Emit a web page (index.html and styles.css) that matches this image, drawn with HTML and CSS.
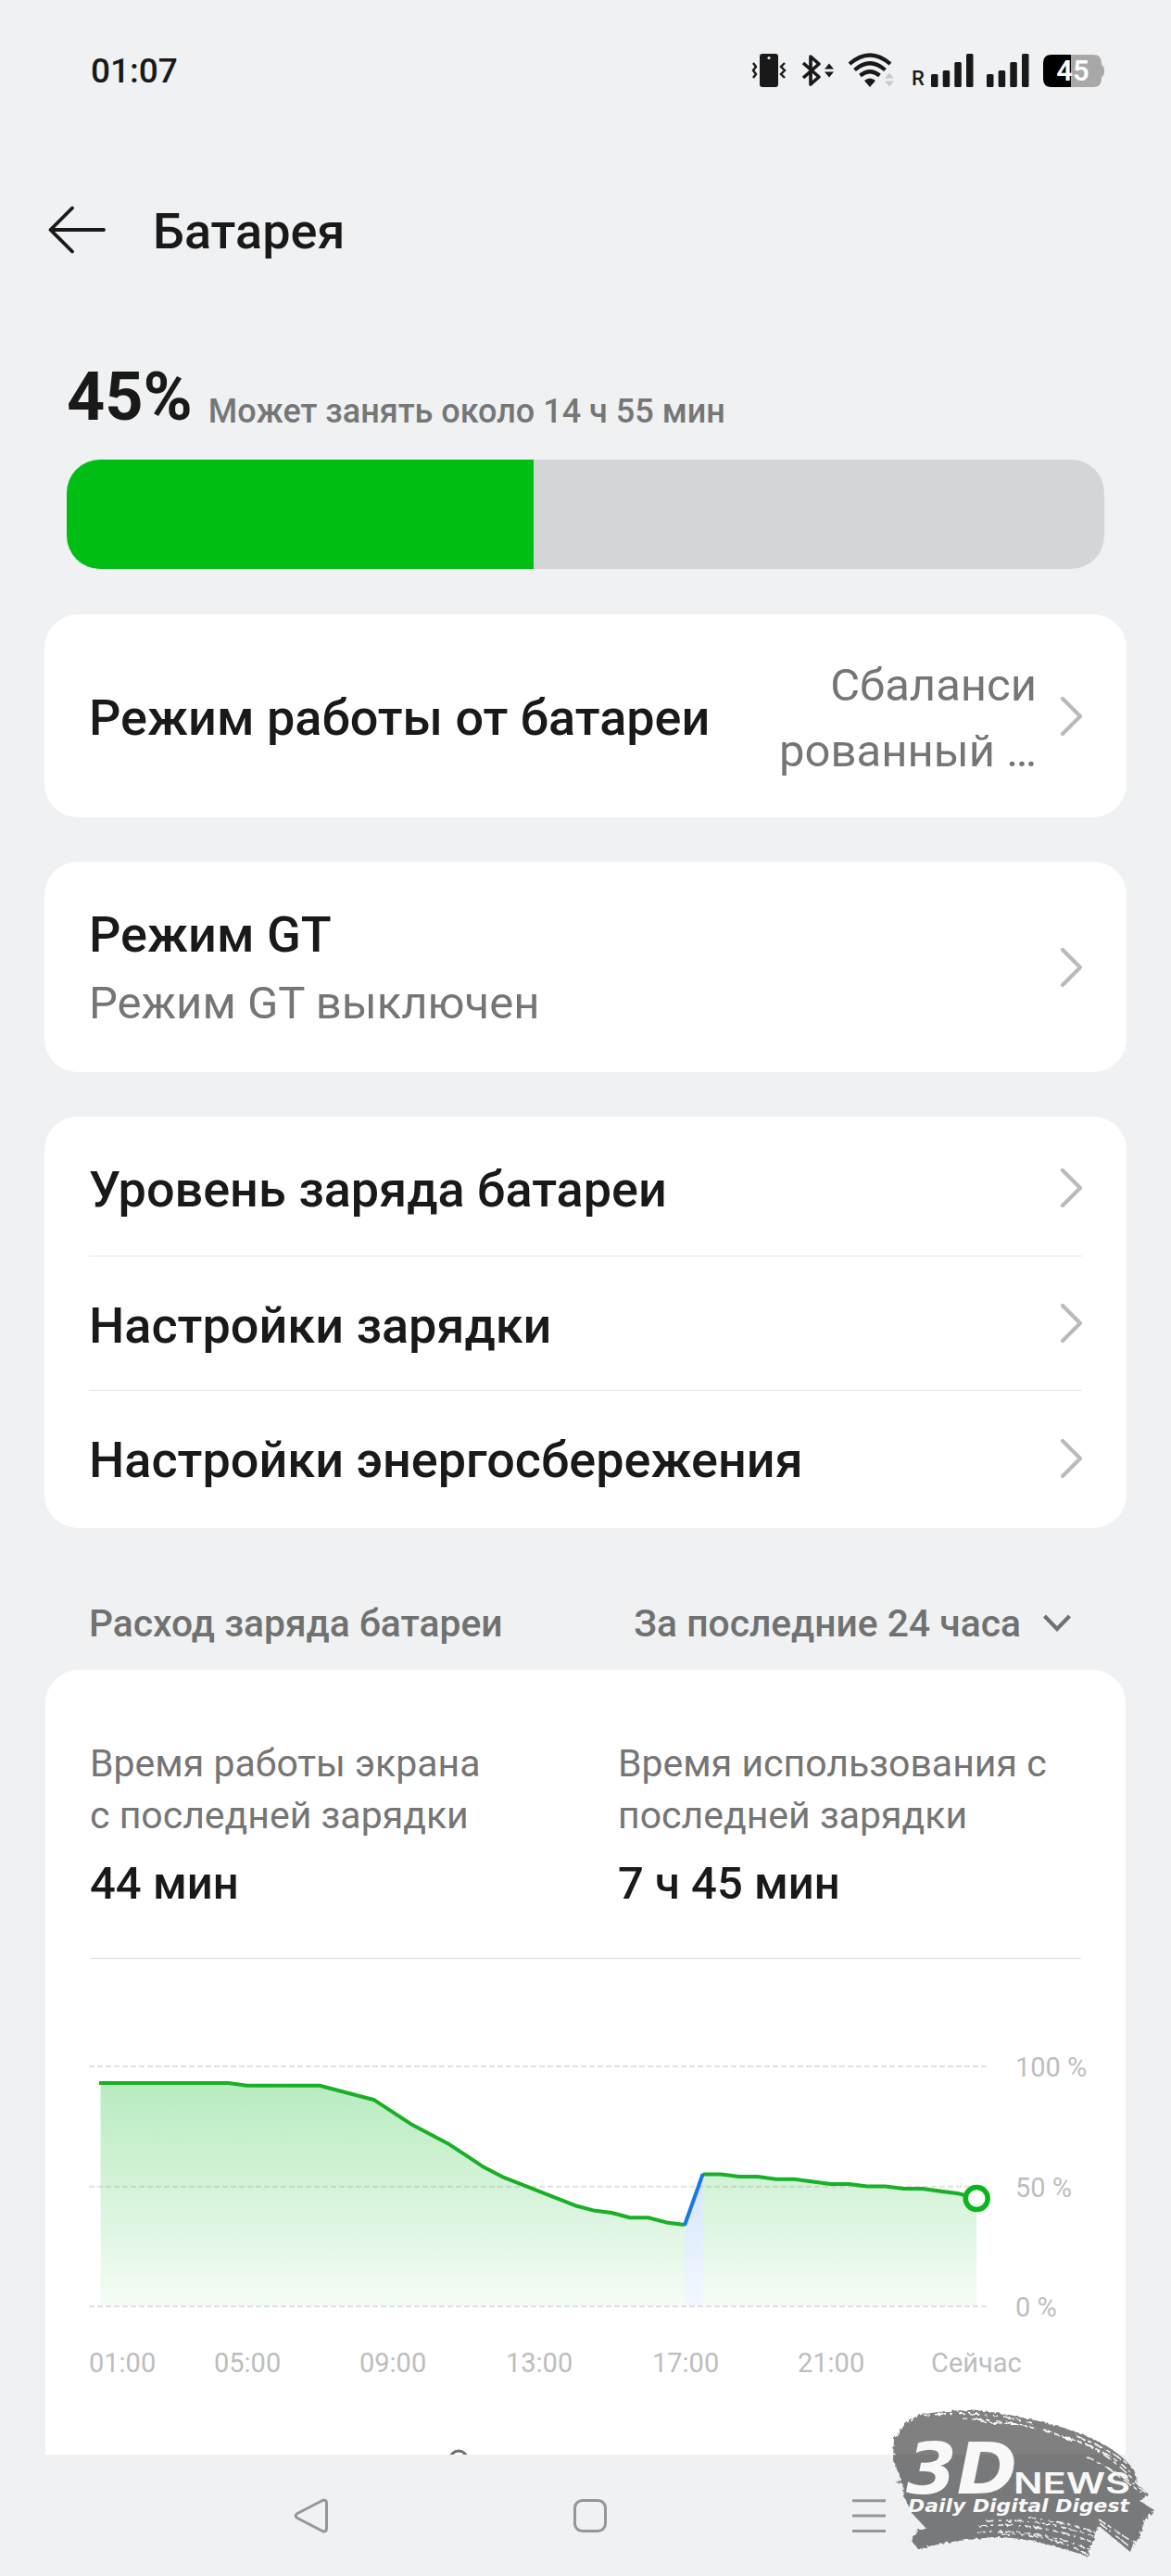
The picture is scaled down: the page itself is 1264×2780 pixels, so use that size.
FILE: index.html
```html
<!DOCTYPE html>
<html lang="ru">
<head>
    <meta charset="UTF-8">
    <meta name="viewport" content="width=device-width, initial-scale=1.0">
    <title>Батарея</title>
    <link rel="stylesheet" href="styles.css">
</head>
<body>
    <div class="screen">
        <!-- Status bar -->
        <div class="status-bar">
            <div class="status-time">01:07</div>
            <div class="status-icons">
                <svg class="icon-vibrate" width="38" height="38" viewBox="0 0 38 38">
                    <rect x="9" y="1" width="20" height="36" rx="3" fill="#191919"/>
                    <circle cx="19" cy="5.5" r="1.6" fill="#eff1f3"/>
                    <path d="M2 11l3 4-3 4 3 4-3 4M36 11l-4 4 4 4-4 4 4 4" fill="none" stroke="#191919" stroke-width="2.4"/>
                </svg>
                <svg class="icon-bluetooth" width="38" height="38" viewBox="0 0 38 38">
                    <path d="M3 11l17 15-9 8V4l9 8L3 27" fill="none" stroke="#191919" stroke-width="3.6" stroke-linejoin="round"/>
                    <path d="M31 11.500l5 6H26zM31 26.500l5-6H26z" fill="#191919"/>
                </svg>
                <svg class="icon-wifi" width="52" height="38" viewBox="0 0 52 38">
                    <path d="M3 12Q25 -7 47 12M8.500 18.500Q25 4 41.500 18.500M14.500 24.500Q25 16 35.500 24.500" fill="none" stroke="#191919" stroke-width="4.200"/>
                    <path d="M19 30Q25 25 31 30L25 37z" fill="#191919"/>
                    <path d="M46 21.500l5 6H41zM46 36.500l5-6H41z" fill="#c9cacc"/>
                </svg>
                <div class="roaming">R</div>
                <svg class="icon-signal" width="46" height="38" viewBox="0 0 46 38">
                    <g fill="#191919">
                        <rect x="0" y="23" width="7.500" height="14" rx="1.500"/>
                        <rect x="12.700" y="19" width="7.500" height="18" rx="1.500"/>
                        <rect x="25.300" y="10" width="7.500" height="27" rx="1.500"/>
                        <rect x="38" y="1" width="7.500" height="36" rx="1.500"/>
                    </g>
                </svg>
                <svg class="icon-signal second" width="46" height="38" viewBox="0 0 46 38">
                    <g fill="#191919">
                        <rect x="0" y="23" width="7.500" height="14" rx="1.500"/>
                        <rect x="12.700" y="19" width="7.500" height="18" rx="1.500"/>
                        <rect x="25.300" y="10" width="7.500" height="27" rx="1.500"/>
                        <rect x="38" y="1" width="7.500" height="36" rx="1.500"/>
                    </g>
                </svg>
                <svg class="icon-battery" width="66" height="38" viewBox="0 0 66 38">
                    <path d="M30 2h24q9 0 9 9v2q3 1 3 6.500t-3 6.500v2q0 9-9 9H30z" fill="#a8a8a8"/>
                    <path d="M30 2H9Q0 2 0 11v17q0 9 9 9h21z" fill="#000"/>
                    <text x="32" y="30" class="battery-text">45</text>
                </svg>
            </div>
        </div>

        <!-- Page header -->
        <div class="page-header">
            <svg width="62" height="52" viewBox="0 0 62 52">
                <path d="M26 2.500L2.500 26 26 49.500M2.500 26H60" fill="none" stroke="#191919" stroke-width="3.800" stroke-linecap="round" stroke-linejoin="round"/>
            </svg>
            <div class="page-title">Батарея</div>
        </div>

        <!-- Charge level -->
        <div class="charge">
            <div class="charge-info">
                <span class="charge-percent">45%</span>
                <span class="charge-estimate">Может занять около 14 ч 55 мин</span>
            </div>
            <div class="charge-bar">
                <div class="charge-fill" style="width: 45%;"></div>
            </div>
        </div>

        <!-- Settings -->
        <div class="card mode-card">
            <div class="row-title">Режим работы от батареи</div>
            <div class="row-value">Сбаланси<br>рованный …</div>
            <svg class="chevron" width="26" height="44" viewBox="0 0 26 44"><path d="M3 3l19 19L3 41"/></svg>
        </div>

        <div class="card gt-card">
            <div class="row-body">
                <div class="row-title">Режим GT</div>
                <div class="row-subtitle">Режим GT выключен</div>
            </div>
            <svg class="chevron" width="26" height="44" viewBox="0 0 26 44"><path d="M3 3l19 19L3 41"/></svg>
        </div>

        <div class="card list-card">
            <div class="list-row">
                <div class="row-title">Уровень заряда батареи</div>
                <svg class="chevron" width="26" height="44" viewBox="0 0 26 44"><path d="M3 3l19 19L3 41"/></svg>
            </div>
            <div class="list-row">
                <div class="row-title">Настройки зарядки</div>
                <svg class="chevron" width="26" height="44" viewBox="0 0 26 44"><path d="M3 3l19 19L3 41"/></svg>
            </div>
            <div class="list-row">
                <div class="row-title">Настройки энергосбережения</div>
                <svg class="chevron" width="26" height="44" viewBox="0 0 26 44"><path d="M3 3l19 19L3 41"/></svg>
            </div>
        </div>

        <!-- Usage -->
        <div class="section-header">
            <div class="section-title">Расход заряда батареи</div>
            <div class="section-filter">
                <span>За последние 24 часа</span>
                <svg width="32" height="22" viewBox="0 0 32 22"><path d="M2.500 3L16 17 29.500 3" fill="none" stroke="#707271" stroke-width="4.200"/></svg>
            </div>
        </div>

        <div class="usage-card">
            <div class="stats">
                <div class="stat">
                    <div class="stat-label">Время работы экрана<br>с последней зарядки</div>
                    <div class="stat-value">44 мин</div>
                </div>
                <div class="stat">
                    <div class="stat-label">Время использования с<br>последней зарядки</div>
                    <div class="stat-value">7 ч 45 мин</div>
                </div>
            </div>

            <svg class="chart" width="1118" height="535" viewBox="0 0 1118 535">
                <defs>
                    <linearGradient id="green" gradientUnits="userSpaceOnUse" x1="0" y1="133" x2="0" y2="374">
                        <stop offset="0" stop-color="#00b91c" stop-opacity="0.28"/>
                        <stop offset="1" stop-color="#00b91c" stop-opacity="0.04"/>
                    </linearGradient>
                    <linearGradient id="blue" gradientUnits="userSpaceOnUse" x1="0" y1="133" x2="0" y2="374">
                        <stop offset="0" stop-color="#1677ef" stop-opacity="0.28"/>
                        <stop offset="1" stop-color="#1677ef" stop-opacity="0.05"/>
                    </linearGradient>
                </defs>
                <path class="grid" d="M-1 115H969M-1 244.700H969M-1 374H969"/>
                <path fill="url(#green)" d="M11.600 374V133.100H149.500L169.200 135.700H248L307.100 151.300 346.500 177.200 385.900 197.900 425.300 223.800 445 234.100 484.400 249.700 523.800 265.200 543.500 270.400 563.200 273 582.900 278.200H602.600L622.300 283.400 642 285.900V374z"/>
                <path fill="url(#blue)" d="M642 374V285.900L661.700 231.600V374z"/>
                <path fill="url(#green)" d="M661.700 374V231.600H681.400L701.100 234.100H720.800L740.500 236.700H760.200L799.600 241.900H819.300L839 244.500H858.700L878.400 247.100H898.100L937.500 252.300 957.200 257.500V374z"/>
                <path class="line" d="M10 133.100H149.500L169.200 135.700H248L307.100 151.300 346.500 177.200 385.900 197.900 425.300 223.800 445 234.100 484.400 249.700 523.800 265.200 543.500 270.400 563.200 273 582.900 278.200H602.600L622.300 283.400 642 285.900"/>
                <path class="line" d="M661.700 231.600H681.400L701.100 234.100H720.800L740.500 236.700H760.200L799.600 241.900H819.300L839 244.500H858.700L878.400 247.100H898.100L937.500 252.300 957.200 257.500"/>
                <path class="line charging" d="M642 286.500L661.700 231"/>
                <circle cx="957.200" cy="257.500" r="12" fill="#fff" stroke="#0cb51e" stroke-width="5.500"/>
                <g class="axis">
                    <text x="999" y="126">100 %</text>
                    <text x="999" y="256">50 %</text>
                    <text x="999" y="385">0 %</text>
                    <text x="-1" y="445">01:00</text>
                    <text x="134" y="445">05:00</text>
                    <text x="291" y="445">09:00</text>
                    <text x="449" y="445">13:00</text>
                    <text x="607" y="445">17:00</text>
                    <text x="764" y="445">21:00</text>
                    <text x="908" y="445">Сейчас</text>
                </g>
                <circle cx="398" cy="539" r="9" fill="none" stroke="#707070" stroke-width="3"/>
            </svg>
        </div>

        <!-- System navigation -->
        <div class="nav-bar">
            <svg width="38" height="38" viewBox="0 0 38 38"><path d="M4 16.500L31 2.500Q35 1 35.500 5V33Q35 37 31 35.500L4 21.500Q0 19 4 16.500z"/></svg>
            <svg width="38" height="38" viewBox="0 0 38 38"><rect x="2.500" y="2.500" width="33" height="33" rx="8"/></svg>
            <svg width="38" height="38" viewBox="0 0 38 38"><path d="M1 2.700H37M1 19H37M1 35.500H37"/></svg>
        </div>

        <!-- Watermark -->
        <svg class="watermark" width="324" height="200" viewBox="0 0 324 200">
            <defs>
                <filter id="rough" x="-5%" y="-5%" width="110%" height="110%">
                    <feTurbulence type="fractalNoise" baseFrequency="0.25" numOctaves="2" seed="4"/>
                    <feDisplacementMap in="SourceGraphic" scale="5"/>
                </filter>
                <mask id="brush" maskUnits="userSpaceOnUse" x="0" y="0" width="324" height="200">
                    <g filter="url(#rough)">
                        <path fill="#fff" d="M50 27Q105 14 168 30 212 39 240 52 270 66 285 87L288 101 300 112 290 119 306 129 296 139 289 160 284 163 280 174 245 145 234 179Q180 160 140 158 90 160 51 171L44 162 52 150 61 150 45 133 36 115 34 100 26 99 33 97 24 75 25 52 37 36z"/>
                        <g fill="none" stroke="#000" stroke-width="1.600">
                            <path stroke-dasharray="6 5 12 4 3 7" d="M58 27Q120 19 178 36M98 30Q145 32 178 41M118 33Q140 36 168 38"/>
                            <path stroke-dasharray="10 3 5 4" d="M210 50Q255 63 280 88M222 49Q262 65 283 84M232 58Q262 72 290 103M186 42L218 54M232 71Q260 83 298 111M255 83L292 110"/>
                            <path stroke-dasharray="9 4 3 5 6 3" d="M125 141Q180 136 240 157M116 146Q180 141 238 163M115 153Q180 148 236 171M140 155Q190 153 234 177M170 137Q210 142 242 153M247 143L279 168M246 139L282 163"/>
                        </g>
                    </g>
                </mask>
            </defs>
            <rect width="324" height="200" fill="#0f0f0f" fill-opacity="0.530" mask="url(#brush)"/>
            <g class="watermark-text">
                <text x="38" y="111" font-size="77" font-style="italic" textLength="120" lengthAdjust="spacingAndGlyphs">3D</text>
                <text x="154" y="111" class="watermark-news" textLength="126" lengthAdjust="spacingAndGlyphs">NEWS</text>
                <text x="40" y="130.500" font-size="20" font-style="italic" textLength="239" lengthAdjust="spacingAndGlyphs">Daily Digital Digest</text>
            </g>
        </svg>
    </div>
</body>
</html>
```

FILE: styles.css
```css
* {
    box-sizing: border-box;
}
body {
    margin: 0;
    background: #eff1f3;
    color: #191919;
    font-family: Roboto, "Noto Sans", sans-serif;
}
svg {
    display: block;
    flex-shrink: 0;
}
.screen {
    position: relative;
    width: 1264px;
    height: 2780px;
    overflow: hidden;
    display: flex;
    flex-direction: column;
}

/* Status bar */
.status-bar {
    height: 152px;
    padding: 0 72px 0 98px;
    display: flex;
    align-items: center;
    justify-content: space-between;
}
.status-time {
    font-size: 37px;
    font-weight: 500;
}
.status-icons {
    display: flex;
    align-items: center;
}
.icon-bluetooth {
    margin-left: 15px;
}
.icon-wifi {
    margin-left: 12px;
}
.roaming {
    width: 21px;
    margin-left: 18px;
    padding-top: 17px;
    font-size: 22px;
    font-weight: 500;
}
.icon-signal.second {
    margin-left: 14px;
}
.icon-battery {
    margin-left: 15px;
}
.battery-text {
    font-size: 31px;
    font-weight: 600;
    fill: #fff;
    text-anchor: middle;
}

/* Page header */
.page-header {
    height: 192px;
    padding: 0 52px;
    display: flex;
    align-items: center;
    gap: 51px;
}
.page-title {
    padding-top: 3px;
    font-size: 54px;
    font-weight: 500;
}

/* Charge level */
.charge {
    padding: 40px 72px 0;
}
.charge-info {
    height: 112px;
    display: flex;
    align-items: flex-start;
    gap: 17px;
}
.charge-percent {
    font-size: 72px;
    font-weight: 700;
    line-height: 89px;
}
.charge-estimate {
    padding-top: 6px;
    font-size: 36px;
    font-weight: 500;
    line-height: 108px;
    color: #757776;
}
.charge-bar {
    height: 118px;
    border-radius: 36px;
    background: #d4d5d7;
    overflow: hidden;
}
.charge-fill {
    height: 100%;
    background: #00be13;
}

/* Cards */
.card {
    margin: 48px 48px 0;
    padding: 0 46px 0 48px;
    border-radius: 36px;
    background: #fff;
}
.chevron {
    fill: none;
    stroke: #bababa;
    stroke-width: 4.2px;
    stroke-linecap: round;
    stroke-linejoin: round;
}
.row-title {
    flex: 1;
    padding-top: 5px;
    font-size: 54px;
    font-weight: 500;
    line-height: 72px;
    white-space: nowrap;
}
.row-value {
    margin-right: 25px;
    padding-top: 5px;
    font-size: 49px;
    line-height: 71.5px;
    text-align: right;
    color: #757575;
}
.row-subtitle {
    font-size: 49px;
    line-height: 76px;
    color: #757575;
}
.mode-card {
    height: 219px;
    margin-top: 49px;
    display: flex;
    align-items: center;
}
.gt-card {
    height: 227px;
    display: flex;
    align-items: center;
}
.row-body {
    flex: 1;
    padding-top: 1px;
}
.list-card {
    height: 444px;
}
.list-row {
    height: 145px;
    margin-right: 2px;
    display: flex;
    align-items: center;
    border-bottom: 1px solid #e6e6e6;
}
.list-row:first-child {
    height: 151px;
    padding-top: 3px;
}
.list-row .chevron {
    margin-right: -2px;
}
.list-row:last-child {
    border-bottom: none;
}

/* Usage */
.section-header {
    height: 153px;
    padding: 52px 107px 0 96px;
    display: flex;
    align-items: center;
    justify-content: space-between;
    font-size: 40.8px;
    font-weight: 500;
    color: #707271;
}
.section-filter {
    display: flex;
    align-items: center;
    gap: 23px;
}
.usage-card {
    height: 847px;
    margin: 0 49px;
    padding-left: 48px;
    border-radius: 36px 36px 0 0;
    background: #fff;
    overflow: hidden;
}
.stats {
    height: 312px;
    width: 1070px;
    padding-top: 73px;
    display: flex;
    margin-bottom: 1px;
    border-bottom: 1px solid #ddd;
}
.stat {
    width: 570px;
    flex-shrink: 0;
}
.stat-label {
    font-size: 41px;
    line-height: 56.3px;
    color: #757575;
}
.stat-value {
    margin-top: 12px;
    font-size: 49px;
    font-weight: 500;
    line-height: 66px;
}
.chart {
    overflow: visible;
}
.grid {
    fill: none;
    stroke: #e2e2e2;
    stroke-width: 2px;
    stroke-dasharray: 6 3;
}
.line {
    fill: none;
    stroke: #18b026;
    stroke-width: 4px;
    stroke-linejoin: round;
}
.line.charging {
    stroke: #1677e8;
}
.axis {
    font-size: 29px;
    fill: #bdbdbd;
}

/* System navigation */
.nav-bar {
    height: 131px;
    padding: 0 307px 0 317px;
    display: flex;
    align-items: center;
    justify-content: space-between;
}
.nav-bar svg {
    fill: none;
    stroke: #959796;
    stroke-width: 3px;
}

/* Watermark */
.watermark {
    position: absolute;
    right: 0;
    bottom: 0;
}
.watermark-text {
    font-family: "DejaVu Sans", sans-serif;
    font-weight: 700;
    fill: #f8f8f8;
}
.watermark-news {
    font-family: Inter, sans-serif;
    font-size: 31px;
    font-weight: 600;
}
```
